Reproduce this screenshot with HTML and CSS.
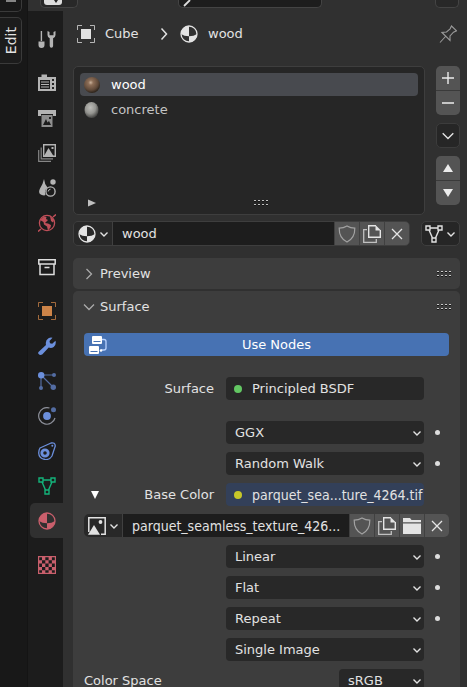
FILE: index.html
```
<!DOCTYPE html>
<html lang="en">
<head>
<meta charset="utf-8">
<title>Material Properties</title>
<link rel="stylesheet" href="styles.css">
</head>
<body>
<svg class="defs" aria-hidden="true">
  <symbol id="chev" viewBox="0 0 10 10"><path d="M1.500 3.500 5 7l3.500-3.500" fill="none" stroke="currentColor" stroke-width="1.400"/></symbol>
  <symbol id="ball" viewBox="0 0 18 18"><circle cx="9" cy="9" r="8" fill="none" stroke="currentColor" stroke-width="1.300"/><path d="M9 1A8 8 0 0 0 1 9q3 2.200 8 2.200zM9 11.200V17A8 8 0 0 0 17 9q-3 2.200-8 2.200z" fill="currentColor"/></symbol>
  <symbol id="object" viewBox="0 0 18 18"><path d="M4 4h10v10H4z" fill="currentColor"/><path d="M.5 5V.5H5M13 .5h4.500V5M17.500 13v4.500H13M5 17.500H.5V13" fill="none" stroke="currentColor" opacity=".75"/></symbol>
  <symbol id="mesh" viewBox="0 0 18 18"><path d="M5 3h8M4 5l3.500 8M14 5l-3.500 8M1 1h4v4H1zM13 1h4v4h-4zM7 13h4v4H7z" fill="none" stroke="currentColor" stroke-width="1.400"/></symbol>
  <symbol id="shield" viewBox="0 0 18 18"><path d="M9 1Q5.500 3.200 1.200 3.200 1 13 9 17 17 13 16.800 3.200 12.500 3.200 9 1z" fill="none" stroke="currentColor" stroke-width="1.200"/></symbol>
  <symbol id="copy" viewBox="0 0 18 18"><path d="M4 4.700H.7v12.600h12.600V14" fill="none" stroke="currentColor" stroke-width="1.300" opacity=".75"/><path d="M13 .7H5.700v11.600h11.600V5" fill="none" stroke="currentColor" stroke-width="1.400"/><path d="M12.500 0 18 5.500h-5.500z" fill="currentColor"/></symbol>
  <symbol id="cross" viewBox="0 0 18 18"><path d="M4 4l10 10M14 4 4 14" fill="none" stroke="currentColor" stroke-width="1.300"/></symbol>
  <symbol id="grip" viewBox="0 0 16 8"><path d="M1 2.500h14M1 6.500h14" fill="none" stroke="#161616" stroke-width="1" stroke-dasharray="2 2"/><path d="M1 1.500h14M1 5.500h14" fill="none" stroke="currentColor" stroke-width="1" stroke-dasharray="2 2"/></symbol>
</svg>

<div class="app">
  <nav class="sidetabs" aria-label="Sidebar">
    <button class="sidetab first" aria-label="Tool"><svg width="10" height="4" viewBox="0 0 10 4"><path d="M0 1h10" stroke="#aaa" stroke-width="1.500"/></svg></button>
    <button class="sidetab edit"><span>Edit</span></button>
  </nav>

  <div class="editor">
    <header class="topbar">
      <button class="editortype" aria-label="Editor type"><svg width="20" height="7" viewBox="0 0 20 7"><path d="M1 0h18v2q0 3-3 3H4Q1 5 1 2z" fill="#ddd"/><path d="M11 0h4l-2 3z" fill="#222"/></svg></button>
      <label class="search"><svg width="12" height="7" viewBox="0 0 12 7"><path d="M1 6 7 0" stroke="#ddd" stroke-width="1.800"/></svg><input type="text" aria-label="Search"></label>
      <button class="options" aria-label="Options"></button>
    </header>

    <div class="columns">
      <nav class="tabs" aria-label="Properties">
        <button class="tab" aria-label="Tool"><svg class="ic" viewBox="0 0 18 18" fill="currentColor"><path d="M2.700 1h1.400v10H2.700zM.5 11.500h6V15q0 3-3 3t-3-3z"/><path d="M9.500 1v4q0 2.300 2.200 3.300V16a1.700 1.700 0 0 0 3.400 0V8.300Q17.500 7.300 17.500 5V1l-2 1v3.200h-4V2z"/></svg></button>
        <div class="group">
          <button class="tab" aria-label="Render"><svg class="ic" viewBox="0 0 18 18" fill="currentColor"><path fill-rule="evenodd" d="M3.500.5h5.500V3h9v14H0V3h3.500zM2 6v9h10V6z"/><path d="M3 8h8M3 10.500h8M3 13h8" stroke="currentColor" stroke-width="1.100"/><path d="M14 5h2v2h-2zM14 9h2v2h-2zM14 13h2v2h-2z" fill="#222"/></svg></button>
          <button class="tab" aria-label="Output"><svg class="ic" viewBox="0 0 18 18" fill="currentColor"><path d="M0 1h18v6h-3V5H3v2H0z"/><path fill-rule="evenodd" opacity=".75" d="M3.500 6h11v12h-11zM5 16h8l-2-4-1.500 1.500L8 10z"/><path d="M11 8h2v2h-2z" fill="#222"/></svg></button>
          <button class="tab" aria-label="View Layer"><svg class="ic" viewBox="0 0 18 18"><path d="M.7 6v11.300H13M3.200 3.500v11.300H15" fill="none" stroke="currentColor" stroke-width="1.200" opacity=".7"/><path d="M5.700.7h11.600v11.600H5.700z" fill="none" stroke="currentColor" stroke-width="1.400"/><path d="M6 12 10.500 4l5 8zM13.500 3h2v2h-2z" fill="currentColor"/></svg></button>
          <button class="tab" aria-label="Scene"><svg class="ic" viewBox="0 0 18 18" fill="currentColor"><path d="M6 0q-1 5-4 9.500Q-1 16 6 16.500q1-.2 1.500-.8-1.800-4 2-7.200Q6.500 5 6 0z"/><circle cx="15" cy="3" r="2.700"/><circle cx="12.500" cy="12.500" r="4.600" fill="none" stroke="currentColor" stroke-width="1.400"/><path d="M10.200 12.500q.2-2 2.300-2.300" fill="none" stroke="currentColor"/></svg></button>
          <button class="tab red" aria-label="World"><svg class="ic" viewBox="0 0 18 18"><circle cx="9" cy="9" r="7.600" fill="none" stroke="currentColor" stroke-width="1.300"/><path d="M0 17.500 3 15M15 3l3-2.500" stroke="currentColor" stroke-width="1.500"/><path d="M2 6 6 2.500 8.500 3 8 5l2 1-3 3 3 .5 3 1.500-.5 2.500L10 16.500 9 12.500 6 10.500 5.500 8zM12 2l4 4-1 2.500-2-1.500z" fill="currentColor"/></svg></button>
        </div>
        <button class="tab light" aria-label="Collection"><svg class="ic" viewBox="0 0 18 18" fill="none" stroke="currentColor" stroke-width="1.500"><path d="M.8 1.800h16.400V6H.8zM2 6v10.500h14V6M6.500 9.500h5"/></svg></button>
        <div class="group">
          <button class="tab orange" aria-label="Object"><svg class="ic"><use href="#object"/></svg></button>
          <button class="tab blue" aria-label="Modifiers"><svg class="ic" viewBox="0 0 18 18"><path d="M1 14.500 8 8Q7 3 10.500 1.200q2-1 4-.4L11.500 4l.5 2.200 2.200.5 3.300-3q1 4-1.800 6.300-2.400 1.500-5 .5l-6.500 7Q2 18.500.6 17-.5 16 1 14.500z" fill="currentColor"/></svg></button>
          <button class="tab blue" aria-label="Particles"><svg class="ic" viewBox="0 0 18 18"><g opacity=".7"><path d="M3 3h13M3 3v13M3 3l12 12" stroke="currentColor" stroke-width="1.200"/><circle cx="16" cy="3" r="2" fill="currentColor"/><circle cx="3" cy="16" r="2" fill="currentColor"/><circle cx="15.300" cy="15.300" r="2.700" fill="currentColor"/></g><circle cx="3.200" cy="3.200" r="3.200" fill="currentColor"/></svg></button>
          <button class="tab blue" aria-label="Physics"><svg class="ic" viewBox="0 0 18 18"><path d="M11.500 1A8.300 8.300 0 1 0 17 11" fill="none" stroke="#8c8f99" stroke-width="1.200"/><circle cx="15.500" cy="2.700" r="2.500" fill="currentColor" opacity=".7"/><circle cx="9" cy="9" r="3.900" fill="currentColor"/></svg></button>
          <button class="tab blue" aria-label="Constraints"><svg class="ic" viewBox="0 0 18 18"><path d="M2 6 13 1q4-1 4.300 3L14 14q-2.500 4-7 3.500Q1 16.500.7 11 .7 8 2 6z" fill="none" stroke="currentColor" stroke-width="1.300"/><circle cx="7" cy="11" r="3.200" fill="none" stroke="currentColor" stroke-width="2.800"/><circle cx="14.300" cy="3.800" r="1" fill="currentColor"/></svg></button>
          <button class="tab green" aria-label="Data"><svg class="ic"><use href="#mesh"/></svg></button>
          <button class="tab pink active" aria-label="Material"><svg class="ic"><use href="#ball"/></svg></button>
        </div>
        <button class="tab pink" aria-label="Texture"><svg class="ic" viewBox="0 0 18 18"><path d="M.6.6h16.800v16.800H.6z" fill="none" stroke="currentColor" stroke-width="1.200"/><path d="M4 1h3.300v3.300H4zM10.600 1h3.300v3.300h-3.300zM1 4.300h3v3.300H1zM7.300 4.300h3.300v3.300H7.300zM13.900 4.300H17v3.300h-3.100zM4 7.600h3.300v3.300H4zM10.600 7.600h3.300v3.300h-3.300zM1 10.900h3v3.300H1zM7.300 10.900h3.300v3.300H7.300zM13.900 10.900H17v3.300h-3.100zM4 14.200h3.300V17H4zM10.600 14.200h3.300V17h-3.300z" fill="currentColor"/></svg></button>
      </nav>

      <main class="props">
        <div class="crumbs">
          <svg class="ic"><use href="#object"/></svg>
          <span class="crumb-object">Cube</span>
          <svg class="crumb-sep" width="8" height="14" viewBox="0 0 8 14"><path d="M1.500 1.500 6.500 7l-5 5.500" fill="none" stroke="currentColor" stroke-width="1.500"/></svg>
          <svg class="ic"><use href="#ball"/></svg>
          <span class="crumb-material">wood</span>
          <button class="pin" aria-label="Pin"><svg class="ic" viewBox="0 0 18 18" fill="none" stroke="currentColor" stroke-width="1.100"><path d="M1 17.500 6.500 11.500M3 7.500 11 15.500V11l3.500-3.800 3-1.400L12.500 1l-1.400 2.800L7.500 7z"/></svg></button>
        </div>

        <section class="slots">
          <div class="slotlist">
            <ul>
              <li class="slot selected"><svg class="sphere" viewBox="0 0 16 16"><defs><radialGradient id="wood" cx=".42" cy=".35" r=".62"><stop offset="0" stop-color="#c9b19b"/><stop offset=".25" stop-color="#8d6e57"/><stop offset=".75" stop-color="#5f4939"/><stop offset="1" stop-color="#32281f"/></radialGradient></defs><circle cx="8" cy="8" r="8" fill="url(#wood)"/></svg><span>wood</span></li>
              <li class="slot"><svg class="sphere" viewBox="0 0 16 16"><defs><radialGradient id="concrete" cx=".42" cy=".35" r=".62"><stop offset="0" stop-color="#bdbdb9"/><stop offset=".6" stop-color="#959591"/><stop offset="1" stop-color="#4c4c4a"/></radialGradient></defs><ellipse cx="7.500" cy="8" rx="7" ry="8" fill="url(#concrete)"/></svg><span>concrete</span></li>
            </ul>
            <div class="listfoot">
              <button class="disclose" aria-label="Filter"><svg width="8" height="8" viewBox="0 0 8 8"><path d="M0 .5v7L8 4z" fill="currentColor"/></svg></button>
              <svg width="16" height="8"><use href="#grip"/></svg>
            </div>
          </div>
          <div class="sidebtns">
            <div class="stack">
              <button aria-label="Add slot"><svg width="12" height="12" viewBox="0 0 12 12"><path d="M0 6h12M6 0v12" stroke="currentColor" stroke-width="1.400"/></svg></button>
              <button aria-label="Remove slot"><svg width="12" height="12" viewBox="0 0 12 12"><path d="M0 6h12" stroke="currentColor" stroke-width="1.400"/></svg></button>
            </div>
            <button class="specials" aria-label="Slot menu"><svg width="12" height="8" viewBox="0 0 12 8"><path d="M.7 1.200 6 6.500l5.300-5.300" fill="none" stroke="currentColor" stroke-width="1.400"/></svg></button>
            <div class="stack">
              <button aria-label="Move up"><svg width="10" height="8" viewBox="0 0 10 8"><path d="M0 8h10L5 0z" fill="currentColor"/></svg></button>
              <button aria-label="Move down"><svg width="10" height="8" viewBox="0 0 10 8"><path d="M0 0h10L5 8z" fill="currentColor"/></svg></button>
            </div>
          </div>
        </section>

        <div class="idrow">
          <div class="idblock outlined">
            <button class="pick" aria-label="Browse material"><svg class="ic"><use href="#ball"/></svg><svg class="chev"><use href="#chev"/></svg></button>
            <input type="text" value="wood" aria-label="Material name">
            <button class="act dim" aria-label="Fake user"><svg class="ic"><use href="#shield"/></svg></button>
            <button class="act" aria-label="New material"><svg class="ic"><use href="#copy"/></svg></button>
            <button class="act" aria-label="Unlink material"><svg class="ic"><use href="#cross"/></svg></button>
          </div>
          <button class="link" aria-label="Link"><svg class="ic"><use href="#mesh"/></svg><svg class="chev"><use href="#chev"/></svg></button>
        </div>

        <section class="panel">
          <div class="phead"><button><svg class="arrow" viewBox="0 0 12 12"><path d="M3.500 1 8.500 6l-5 5" fill="none" stroke="currentColor" stroke-width="1.300"/></svg>Preview</button><svg width="16" height="8"><use href="#grip"/></svg></div>
        </section>

        <section class="panel">
          <div class="phead"><button><svg class="arrow" viewBox="0 0 12 12"><path d="M1 3.500 6 8.500l5-5" fill="none" stroke="currentColor" stroke-width="1.300"/></svg>Surface</button><svg width="16" height="8"><use href="#grip"/></svg></div>
          <div class="pbody">
            <button class="usenodes"><svg width="20" height="18" viewBox="0 0 20 18"><path d="M4 1q0-1 1-1h8q1 0 1 1v6q0 1-1 1H5q-1 0-1-1zM1 11q0-1 1-1h8q1 0 1 1v6q0 1-1 1H2q-1 0-1-1z" fill="#fff"/><path d="M5.500 5.500h7M2.500 15.500h7" stroke="#4772b3" stroke-width="1.200"/><path d="M14 3.500h2q2 0 2 2V12q0 2-2 2h-3" fill="none" stroke="#b9d2ff" stroke-width="1.300"/><circle cx="13" cy="14.500" r="1.300" fill="#fff"/></svg><span>Use Nodes</span></button>

            <div class="row spaced"><span class="label">Surface</span><button class="socket"><i class="green-dot"></i>Principled BSDF</button></div>

            <div class="row"><span class="drop"><select aria-label="Distribution"><option>GGX</option></select><svg class="chev"><use href="#chev"/></svg></span><i class="key"></i></div>
            <div class="row"><span class="drop"><select aria-label="Subsurface method"><option>Random Walk</option></select><svg class="chev"><use href="#chev"/></svg></span><i class="key"></i></div>
            <div class="row"><span class="label open"><svg width="8" height="8" viewBox="0 0 8 8"><path d="M0 0h8L4 8z" fill="#fff"/></svg>Base Color</span><button class="socket linked filename"><i class="yellow-dot"></i>parquet_sea...ture_4264.tif</button></div>

            <div class="idblock">
              <button class="pick" aria-label="Browse image"><svg class="ic" viewBox="0 0 18 18"><path d="M13 17.200h4.200V.8H.8V15" fill="none" stroke="currentColor" stroke-width="1.500"/><path d="M0 17.800 6 8l6 9.800z" fill="currentColor"/><circle cx="12.500" cy="5" r="1.900" fill="currentColor"/></svg><svg class="chev"><use href="#chev"/></svg></button>
              <input class="filename" type="text" value="parquet_seamless_texture_426..." aria-label="Image name">
              <button class="act dim" aria-label="Fake user"><svg class="ic"><use href="#shield"/></svg></button>
              <button class="act" aria-label="New image"><svg class="ic"><use href="#copy"/></svg></button>
              <button class="act" aria-label="Open image"><svg class="ic" viewBox="0 0 18 18"><path d="M0 1h7l1.500 2H18v2.200H0zM0 6.500h18V17H0z" fill="currentColor"/></svg></button>
              <button class="act" aria-label="Unlink image"><svg class="ic"><use href="#cross"/></svg></button>
            </div>

            <div class="row"><span class="drop"><select aria-label="Interpolation"><option>Linear</option></select><svg class="chev"><use href="#chev"/></svg></span><i class="key"></i></div>
            <div class="row"><span class="drop"><select aria-label="Projection"><option>Flat</option></select><svg class="chev"><use href="#chev"/></svg></span><i class="key"></i></div>
            <div class="row"><span class="drop"><select aria-label="Extension"><option>Repeat</option></select><svg class="chev"><use href="#chev"/></svg></span><i class="key"></i></div>
            <div class="row"><span class="drop"><select aria-label="Source"><option>Single Image</option></select><svg class="chev"><use href="#chev"/></svg></span></div>
            <div class="row colorspace"><label for="space">Color Space</label><span class="drop"><select id="space"><option>sRGB</option></select><svg class="chev"><use href="#chev"/></svg></span></div>
          </div>
        </section>
      </main>
    </div>
  </div>
</div>
</body>
</html>
```
FILE: styles.css
```
* { box-sizing: border-box; }

body {
  margin: 0;
  height: 100vh;
  overflow: hidden;
  background: #303030;
  color: #e2e2e2;
  font: 13px/16px "DejaVu Sans", sans-serif;
}

button, input, select {
  margin: 0;
  padding: 0;
  border: 0;
  border-radius: 0;
  background: none;
  color: inherit;
  font: inherit;
  appearance: none;
  outline: 0;
}

button { display: flex; align-items: center; justify-content: center; }
svg { display: block; flex: none; }
ul { list-style: none; margin: 0; padding: 0; }

.defs { position: absolute; width: 0; height: 0; }
.ic { width: 18px; height: 18px; }
.chev { width: 10px; height: 10px; }
.filename { font-family: "DejaVu Sans Condensed", "DejaVu Sans", sans-serif; font-size: 14px; }

.app { display: flex; height: 100vh; }

/* Vertical region tabs */
.sidetabs {
  flex: none;
  width: 28px;
  background: #181818;
  border-right: 1px solid #141414;
}
.sidetab {
  width: 22px;
  border: 1px solid #3a3a3a;
  border-left: 0;
  border-radius: 0 5px 5px 0;
}
.first { height: 12px; border-top: 0; border-top-right-radius: 0; align-items: flex-start; }
.edit { height: 47px; margin-top: 5px; background: #1c1c1c; }
.edit span { writing-mode: vertical-rl; transform: rotate(180deg); font-size: 14px; }

.editor { flex: 1; min-width: 0; display: flex; flex-direction: column; }

.topbar { flex: none; height: 11px; display: flex; align-items: flex-start; padding: 0 8px 0 12px; }
.editortype, .options { height: 8px; background: #282828; border: 1px solid #444; border-top: 0; border-radius: 0 0 5px 5px; }
.editortype { width: 38px; justify-content: flex-start; padding-left: 2px; }
.options { width: 24px; }
.search { display: flex; width: 144px; height: 8px; margin: 0 auto 0 100px; background: #1d1d1d; border: 1px solid #444; border-top: 0; border-radius: 0 0 5px 5px; }
.search svg { margin-left: 4px; }
.search input { width: 100%; min-width: 0; height: 6px; }

.columns { flex: 1; min-height: 0; display: flex; }

/* Property tabs */
.tabs {
  flex: none;
  width: 35px;
  padding: 10px 0 0 2px;
  background: #1c1c1c;
  display: flex;
  flex-direction: column;
  gap: 9px;
}
.tab { width: 33px; height: 35px; color: #b4b4b4; border-radius: 5px 0 0 5px; }
.active { background: #303030; }
.light { color: #ddd; }
.red { color: #bf4f59; }
.orange { color: #cd8448; }
.blue { color: #6b8fdc; }
.green { color: #13b37a; }
.pink { color: #c95f6c; }

/* Properties column */
.props { flex: 1; min-width: 0; padding: 0 7px 0 10px; overflow: hidden; }

.crumbs { display: flex; align-items: center; height: 45px; padding: 0 3px 0 4px; }
.crumb-object { min-width: 34px; margin-left: 10px; }
.crumb-sep { margin: 0 12px 0 21px; }
.crumb-material { margin-left: 10px; }
.pin { margin-left: auto; color: #999; }

.slots { display: flex; gap: 11px; margin-top: 10px; }
.slotlist {
  flex: 1;
  height: 149px;
  padding: 6px;
  display: flex;
  flex-direction: column;
  background: #262626;
  border: 1px solid #3e3e3e;
  border-radius: 5px;
}
.slot { display: flex; align-items: center; gap: 11px; height: 23px; padding-left: 4px; margin-bottom: 2px; border-radius: 4px; color: #c4c4c4; }
.slot.selected { background: #484a4f; color: #fff; }
.sphere { width: 16px; height: 16px; }
.listfoot { margin-top: auto; display: flex; align-items: center; height: 10px; padding-left: 8px; color: #c0c0c0; }
.disclose { width: 16px; justify-content: flex-start; }
.listfoot > svg { margin: 0 auto; }

.sidebtns { width: 24px; display: flex; flex-direction: column; gap: 8px; }
.stack { display: flex; flex-direction: column; gap: 1px; border-radius: 5px; overflow: hidden; background: #3a3a3a; }
.stack button { width: 24px; height: 24px; background: #545454; color: #ececec; }
.specials { height: 25px; background: #262626; border: 1px solid #3c3c3c; border-radius: 5px; }

.idrow { display: flex; gap: 11px; margin-top: 6px; }
.idblock { flex: 1; display: flex; gap: 1px; height: 23px; border-radius: 5px; overflow: hidden; background: #404040; }
.outlined, .link { height: 25px; border: 1px solid #3e3e3e; }
.pick { width: 38px; gap: 3px; background: #282828; }
.idblock input { flex: 1; min-width: 0; padding-left: 9px; background: #1d1d1d; }
.act { width: 24px; background: #545454; color: #e4e4e4; }
.dim { color: #a2a2a2; }
.link { width: 39px; gap: 3px; background: #262626; border-radius: 5px; }

.panel { margin-top: 2px; border-radius: 5px; background: #3d3d3d; }
.idrow + .panel { margin-top: 12px; }
.phead { display: flex; align-items: center; justify-content: space-between; height: 31px; padding: 0 8px 0 10px; color: #c8c8c8; }
.phead button { gap: 5px; color: #e2e2e2; }
.arrow { width: 12px; height: 12px; color: #aaa; }

.pbody { display: flex; flex-direction: column; gap: 8px; padding: 11px 11px 12px; }
.pbody .idblock { flex: none; }
.usenodes { position: relative; height: 23px; padding-left: 20px; background: #4772b3; color: #fff; border-radius: 4px; }
.usenodes svg { position: absolute; left: 4px; top: 3px; }

.row { display: grid; grid-template-columns: 142fr 198fr 25px; align-items: center; height: 23px; }
.spaced { margin: 13px 0; }
.label { padding-right: 12px; text-align: right; }
.open { display: flex; align-items: center; justify-content: space-between; padding-left: 7px; }
.socket { grid-column: 2; min-width: 0; height: 23px; justify-content: flex-start; gap: 10px; padding-left: 8px; background: #282828; border-radius: 4px; white-space: nowrap; overflow: hidden; }
.linked { background: #334059; }
.socket i { flex: none; width: 8px; height: 8px; border-radius: 50%; }
.green-dot { background: #63c763; }
.yellow-dot { background: #c7c729; }
.drop { grid-column: 2; display: grid; align-items: center; height: 23px; background: #282828; border-radius: 4px; }
.drop select { grid-area: 1 / 1; width: 100%; height: 23px; padding-left: 9px; }
.drop .chev { grid-area: 1 / 1; justify-self: end; margin-right: 2px; pointer-events: none; }
.key { width: 5px; height: 5px; margin-left: 11px; border-radius: 50%; background: #ddd; }
.colorspace { grid-template-columns: 255fr 85fr 25px; }
```
